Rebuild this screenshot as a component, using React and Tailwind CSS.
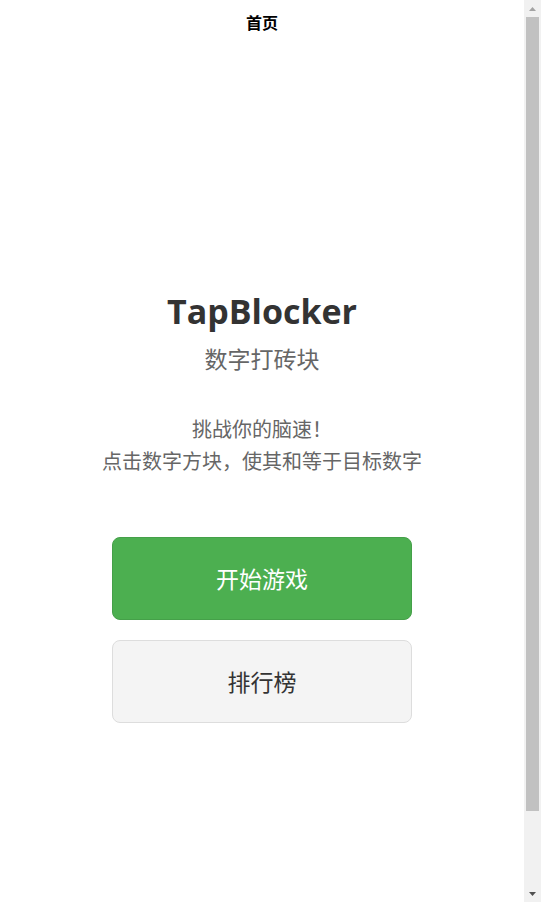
export default function App() {
  return (
    <div className="h-[902px] flex bg-white overflow-hidden font-['Noto_Sans_CJK_SC',sans-serif]">
      <div className="flex-1 flex flex-col">
        <div className="h-11 flex items-center justify-center">
          <span className="text-[16px] font-bold text-black">首页</span>
        </div>
        <div className="flex flex-col items-center pt-[246px]">
          <h1 className="text-[34px] leading-[43px] font-bold text-[#333333] font-['Open_Sans','Noto_Sans_CJK_SC',sans-serif]">TapBlocker</h1>
          <p className="mt-[7px] text-[23px] leading-[36px] text-[#666666]">数字打砖块</p>
          <div className="mt-[37px] text-center text-[20px] leading-[32px] text-[#666666]">
            <p>挑战你的脑速！</p>
            <p>点击数字方块，使其和等于目标数字</p>
          </div>
          <button className="mt-[60px] w-[300px] h-[83px] rounded-[8px] bg-[#4CAF50] border border-[#45a049] text-white text-[23px]">开始游戏</button>
          <button className="mt-[20px] w-[300px] h-[83px] rounded-[8px] bg-[#f4f4f4] border border-[#dddddd] text-[#333333] text-[23px]">排行榜</button>
        </div>
      </div>
      <div className="w-[17px] h-full bg-[#f1f1f1] flex flex-col items-center">
        <div className="h-[17px] w-full flex items-center justify-center">
          <svg width="7" height="4" viewBox="0 0 7 4"><path d="M3.5 0 L7 4 L0 4 Z" fill="#a3a3a3" /></svg>
        </div>
        <div className="w-[13px] h-[794px] bg-[#c1c1c1]" />
        <div className="flex-1" />
        <div className="h-[17px] w-full flex items-center justify-center">
          <svg width="7" height="4" viewBox="0 0 7 4"><path d="M0 0 L7 0 L3.5 4 Z" fill="#505050" /></svg>
        </div>
      </div>
    </div>
  );
}
